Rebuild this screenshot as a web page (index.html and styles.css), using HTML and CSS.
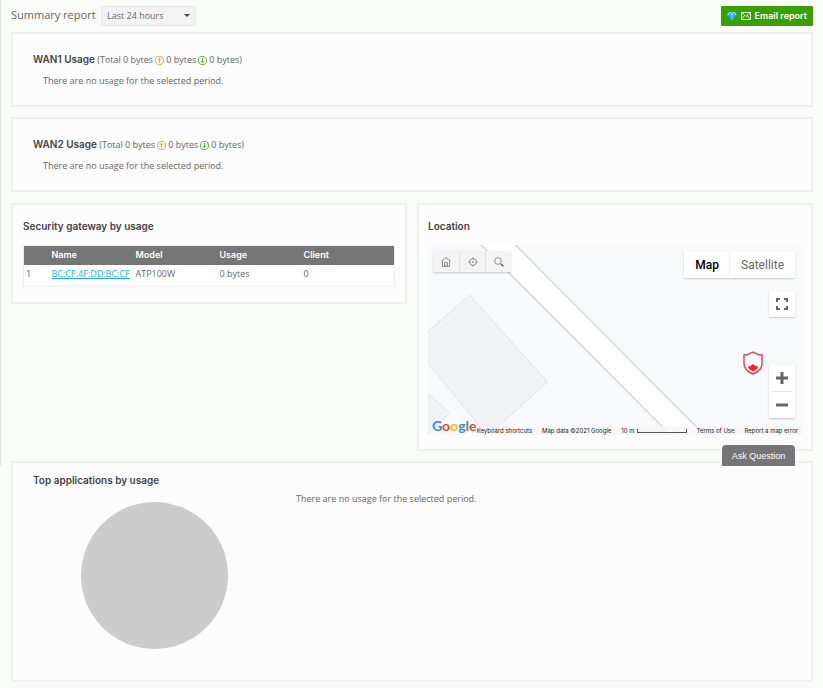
FILE: index.html
```html
<!DOCTYPE html>
<html lang="en">
<head>
    <meta charset="UTF-8">
    <meta name="viewport" content="width=device-width, initial-scale=1.0">
    <title>Summary report</title>
    <link rel="stylesheet" href="styles.css">
</head>
<body>
    <header class="toolbar">
        <label class="toolbar-title" for="period">Summary report</label>
        <div class="period">
            <select id="period">
                <option>Last 24 hours</option>
                <option>Last 7 days</option>
                <option>Last 30 days</option>
            </select>
        </div>
        <button type="button" class="email-btn">
            <svg class="gem" width="10" height="9" viewBox="0 0 10 9">
                <path d="M2 0h6l2 3-5 6-5-6z" fill="#16a9f5"/>
                <path d="M2 0h6l2 3H0z" fill="#7fdcff"/>
                <path d="M3 3h4L5 9z" fill="#35c4ff"/>
                <path d="M2 0l1 3 2-3 2 3 1-3" fill="none" stroke="#0b86cc" stroke-width=".5"/>
            </svg>
            <svg width="10" height="8" viewBox="0 0 10 8" fill="none" stroke="#fff" stroke-width=".8">
                <path d="M.5.5h9v7h-9zM.5.5L5 4.500 9.500.5M.5 7.500l3-4M9.500 7.500l-3-4"/>
            </svg>
            Email report
        </button>
    </header>

    <main class="report">
        <section class="panel wan">
            <h2>WAN1 Usage</h2>
            <span class="total">(Total 0 bytes
                <svg class="arrow up" viewBox="0 0 10 10"><circle cx="5" cy="5" r="4.500"/><path d="M5 8V2.500M3 4.500l2-2 2 2"/></svg>
                0 bytes
                <svg class="arrow down" viewBox="0 0 10 10"><circle cx="5" cy="5" r="4.500"/><path d="M5 2v5.500M3 5.500l2 2 2-2"/></svg>
                0 bytes)</span>
            <p>There are no usage for the selected period.</p>
        </section>

        <section class="panel wan">
            <h2>WAN2 Usage</h2>
            <span class="total">(Total 0 bytes
                <svg class="arrow up" viewBox="0 0 10 10"><circle cx="5" cy="5" r="4.500"/><path d="M5 8V2.500M3 4.500l2-2 2 2"/></svg>
                0 bytes
                <svg class="arrow down" viewBox="0 0 10 10"><circle cx="5" cy="5" r="4.500"/><path d="M5 2v5.500M3 5.500l2 2 2-2"/></svg>
                0 bytes)</span>
            <p>There are no usage for the selected period.</p>
        </section>

        <div class="columns">
            <section class="panel gateway">
                <h2>Security gateway by usage</h2>
                <table>
                    <thead>
                        <tr><th class="num"></th><th>Name</th><th>Model</th><th>Usage</th><th class="client">Client</th></tr>
                    </thead>
                    <tbody>
                        <tr><td class="num">1</td><td><a href="#">BC:CF:4F:DD:BC:CF</a></td><td>ATP100W</td><td>0 bytes</td><td>0</td></tr>
                    </tbody>
                </table>
            </section>

            <section class="panel location">
                <h2>Location</h2>
                <div class="map">
                    <svg class="tiles" viewBox="0 0 375 190" preserveAspectRatio="xMidYMid slice">
                        <g fill="#f1f2f4" stroke="#dfe1e4">
                            <path d="M-1 88L42 50l78 87-60 54L-1 116z"/>
                            <path d="M-1 147l23 21-23 22z"/>
                        </g>
                        <path d="M53 -1L244 191H278L87 -1z" fill="#fff" stroke="#d5d8dc" stroke-width="1.500"/>
                    </svg>

                    <div class="map-tools">
                        <button type="button" aria-label="Home">
                            <svg width="10" height="10" viewBox="0 0 10 10"><path d="M.5 4L5 .5 9.500 4M1.500 3.500v6h7v-6M3.500 9.500V5.500h3v4M5 9.500v-2"/></svg>
                        </button>
                        <button type="button" aria-label="Locate">
                            <svg width="10" height="10" viewBox="0 0 10 10"><circle cx="5" cy="5" r="3.500"/><circle cx="5" cy="5" r=".6"/><path d="M5 .5v2M5 7.500v2M.5 5h2M7.500 5h2"/></svg>
                        </button>
                        <button type="button" aria-label="Search">
                            <svg width="10" height="10" viewBox="0 0 10 10"><circle cx="4" cy="4" r="3.300"/><path d="M6.300 6.300l1 1"/><path class="handle" d="M7 7l2.300 2.300"/></svg>
                        </button>
                    </div>

                    <div class="map-type">
                        <button type="button" class="active">Map</button>
                        <button type="button">Satellite</button>
                    </div>

                    <button type="button" class="fullscreen" aria-label="Fullscreen">
                        <svg width="12" height="12" viewBox="0 0 12 12"><path d="M1 4V1h3M8 1h3v3M11 8v3H8M4 11H1V8"/></svg>
                    </button>

                    <svg class="marker" width="20" height="24" viewBox="0 0 20 24">
                        <path d="M10 1c2.500 1.800 5.500 2.800 9 3v8.500c0 5-4 8.500-9 10.500-5-2-9-5.500-9-10.500V4c3.500-.2 6.500-1.200 9-3z" fill="#fff" fill-opacity=".6" stroke="#f8323f" stroke-width="1.400"/>
                        <path d="M10 13c1.500 1.300 3 2.200 5.200 2.700-.8 2.300-2.700 3.700-5.200 4.600-2.500-.9-4.400-2.300-5.200-4.600C7 15.200 8.500 14.300 10 13z" fill="#ff1f30"/>
                    </svg>

                    <div class="zoom">
                        <button type="button" aria-label="Zoom in">
                            <svg width="12" height="12" viewBox="0 0 12 12"><path d="M6 0v12M0 6h12"/></svg>
                        </button>
                        <button type="button" aria-label="Zoom out">
                            <svg width="12" height="12" viewBox="0 0 12 12"><path d="M0 6h12"/></svg>
                        </button>
                    </div>

                    <div class="google"><span class="blue">G</span><span class="red">o</span><span class="yellow">o</span><span class="blue">g</span><span class="green">l</span><span class="red">e</span></div>

                    <div class="map-footer">
                        <button type="button">Keyboard shortcuts</button>
                        <span>Map data ©2021 Google</span>
                        <span class="scale">10 m <i></i></span>
                        <a href="#">Terms of Use</a>
                        <a href="#">Report a map error</a>
                    </div>
                </div>
            </section>
        </div>

        <section class="panel apps">
            <h2>Top applications by usage</h2>
            <div class="apps-body">
                <div class="pie"></div>
                <p>There are no usage for the selected period.</p>
            </div>
        </section>
    </main>

    <button type="button" class="ask">Ask Question</button>
</body>
</html>
```
FILE: styles.css
```css
* {
    box-sizing: border-box;
}
body {
    margin: 0;
    padding: 6px 10px 6px 11px;
    position: relative;
    background: linear-gradient(#dfe1da, #dfe1da) 0 0 / 1px 466px no-repeat #f9fbf8;
    font-family: "Open Sans", Inter, sans-serif;
    font-size: 9px;
    line-height: 12px;
    color: #666;
}
button, select {
    font: inherit;
    color: inherit;
    margin: 0;
    padding: 0;
    border: 0;
    background: none;
}
h2 {
    margin: 0;
    font-family: Inter, sans-serif;
    font-size: 10px;
    line-height: 14px;
    font-weight: 600;
    color: #444;
}
p {
    margin: 0;
}

/* Top bar */
.toolbar {
    display: flex;
    align-items: center;
    height: 20px;
    margin-bottom: 6px;
}
.toolbar-title {
    width: 90px;
    padding-bottom: 2px;
    font-size: 11px;
    line-height: 16px;
}
.period {
    position: relative;
}
.period::after {
    content: "";
    position: absolute;
    right: 6px;
    top: 8px;
    border: 3px solid transparent;
    border-top-color: #444;
    border-bottom: 0;
}
.period select {
    appearance: none;
    width: 95px;
    height: 20px;
    padding-left: 5px;
    background: #f3f3f3;
    border: 1px solid #e8e8e8;
    border-radius: 2px;
}
.email-btn {
    display: flex;
    align-items: center;
    gap: 4px;
    height: 20px;
    margin-left: auto;
    padding: 0 6px;
    background: #3a9f00;
    border-radius: 1px;
    color: #fff;
    font-family: Inter, sans-serif;
    font-weight: 600;
}

/* Panels */
.report {
    display: flex;
    flex-direction: column;
    gap: 10px;
}
.panel {
    background: #fcfcfc;
    border: 2px solid #eff0ee;
}
.wan {
    padding: 18px 20px;
}
.wan h2 {
    display: inline-block;
}
.total {
    display: inline-flex;
    align-items: center;
    gap: 2px;
}
.wan p {
    margin: 9px 0 0 10px;
}
.arrow {
    width: 9px;
    height: 9px;
    fill: none;
    stroke-width: 1;
    overflow: visible;
}
.up {
    stroke: #ff9a2e;
}
.down {
    stroke: #4caf22;
}
.columns {
    display: grid;
    grid-template-columns: 1fr 1fr;
    gap: 10px;
    align-items: start;
    margin-top: 1px;
}

/* Gateway table */
.gateway {
    padding: 14px 10px 15px;
}
table {
    width: 100%;
    margin-top: 12px;
    border-collapse: collapse;
    table-layout: fixed;
    background: #fff;
    border: 1px solid #eee;
}
th, td {
    padding: 0 0 0 2px;
    text-align: left;
    white-space: nowrap;
}
th {
    height: 19px;
    background: #767676;
    color: #fff;
    font-family: Inter, sans-serif;
    font-weight: 600;
}
td {
    height: 22px;
    padding-bottom: 2px;
}
.num {
    width: 26px;
}
.client {
    width: 93px;
}
a {
    color: #1eb0ee;
}

/* Map */
.location {
    padding: 14px 9px;
}
.map {
    position: relative;
    height: 190px;
    margin-top: 12px;
    overflow: hidden;
    background: #f8f9fb;
}
.map svg {
    display: block;
}
.map .tiles {
    width: 100%;
    height: 100%;
}
.map-tools, .map-type, .fullscreen, .zoom {
    position: absolute;
    display: flex;
    background: #fff;
    border-radius: 1px;
    box-shadow: 0 1px 2px rgba(0, 0, 0, .2);
}
.map button {
    display: flex;
    align-items: center;
    justify-content: center;
}
.map-tools {
    top: 6px;
    left: 5px;
    background: #f3f3f3;
}
.map-tools button {
    width: 26px;
    height: 21px;
}
.map-tools button + button {
    border-left: 1px solid #e2e2e2;
}
.map-tools svg {
    fill: none;
    stroke: #777;
    stroke-width: .8;
}
.map-tools .handle {
    stroke-width: 1.6;
    stroke: #555;
}
.map-type {
    top: 6px;
    right: 7px;
    font-family: Roboto, sans-serif;
    font-size: 12px;
}
.map-type button {
    height: 27px;
    padding: 0 11px;
}
.map-type button + button {
    border-left: 1px solid #eee;
}
.map-type .active {
    padding-right: 10px;
    color: #000;
    font-weight: 500;
}
.fullscreen {
    top: 46px;
    right: 7px;
    width: 26px;
    height: 26px;
}
.map .fullscreen {
    background: #fff;
}
.fullscreen svg, .zoom svg {
    fill: none;
    stroke: #666;
    stroke-width: 2;
}
.marker {
    position: absolute;
    right: 39px;
    top: 106px;
}
.zoom {
    flex-direction: column;
    right: 7px;
    top: 120px;
    width: 26px;
    padding: 0 3px;
}
.zoom button {
    height: 26px;
}
.zoom button + button {
    height: 27px;
    border-top: 1px solid #e6e6e6;
}
.zoom svg {
    stroke-width: 3;
}
.google {
    position: absolute;
    left: 4px;
    bottom: 1px;
    font-family: Lato, sans-serif;
    font-size: 14px;
    line-height: 16px;
    font-weight: 700;
}
.blue {
    color: #4285f4;
}
.red {
    color: #ea4335;
}
.yellow {
    color: #fbbc05;
}
.green {
    color: #34a853;
}
.map-footer {
    position: absolute;
    right: 0;
    bottom: 0;
    display: flex;
    gap: 10px;
    padding-right: 4px;
    background: rgba(245, 245, 245, .8);
    font-family: Inter, sans-serif;
    font-size: 6px;
    line-height: 9px;
    color: #222;
    white-space: nowrap;
}
.map-footer a {
    color: #222;
    text-decoration: none;
}
.scale {
    display: flex;
    align-items: center;
    gap: 2px;
}
.scale i {
    width: 50px;
    height: 4px;
    border: 1px solid #555;
    border-top: 0;
}

/* Top applications */
.apps {
    padding: 10px 20px 31px;
}
.apps-body {
    display: flex;
    gap: 68px;
    margin-top: 15px;
    padding-left: 48px;
}
.apps-body p {
    margin-top: -9px;
}
.pie {
    width: 147px;
    height: 147px;
    border-radius: 50%;
    background: #ccc;
}

/* Sticks out over the panels, on the right */
.ask {
    position: absolute;
    top: 445px;
    right: 28px;
    width: 73px;
    height: 21px;
    background: #767676;
    border-radius: 4px 4px 0 0;
    color: #fff;
    font-family: "Liberation Sans", Arial, sans-serif;
}
```
